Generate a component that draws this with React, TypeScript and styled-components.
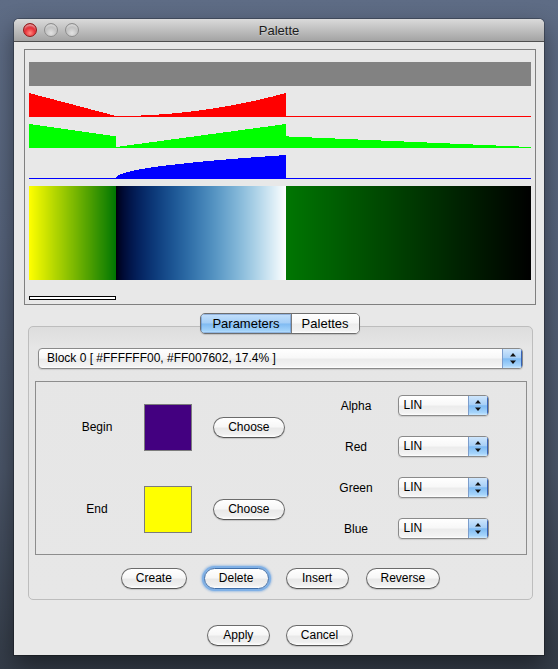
import React from "react";
import styled, { createGlobalStyle, css } from "styled-components";

const GlobalStyle = createGlobalStyle`
  html, body { margin: 0; padding: 0; }
  body {
    width: 558px;
    height: 669px;
    overflow: hidden;
    background: linear-gradient(to bottom, #5e6c85 0%, #56637b 35%, #4a5568 70%, #343c48 100%);
    font-family: "Liberation Sans", Arial, sans-serif;
  }
`;

/* ---------- data for the palette preview ---------- */
const CHART_W = 502;
const B0 = 87;
const B1 = 257;
type RGB = [number, number, number];

function colorAt(c: number): RGB {
  if (c < B0) {
    const t = c / B0;
    return [255 * (1 - t), 255 - 137 * t, 2 * t];
  }
  if (c < B1) {
    const t = (c - B0) / (B1 - B0);
    return [255 * t * t, 255 * t, 255 * Math.sqrt(t)];
  }
  const t = (c - B1) / (CHART_W - B1);
  return [0, 118 * (1 - t), 2 * (1 - t)];
}

const columns: RGB[] = Array.from({ length: CHART_W }, (_, x) => colorAt(x + 0.5));

function stepPath(ch: 0 | 1 | 2): string {
  let d = "M0 24";
  columns.forEach((rgb, x) => {
    const h = 1 + Math.round((rgb[ch] / 255) * 23);
    d += `V${24 - h}H${x + 1}`;
  });
  return d + "V24Z";
}

const rgbStr = (c: RGB) =>
  `rgb(${Math.round(c[0])},${Math.round(c[1])},${Math.round(c[2])})`;

/* ---------- window chrome ---------- */
const Desktop = styled.div`
  box-sizing: border-box;
  width: 558px;
  height: 669px;
  padding: 19px 0 0 14px;
`;

const Window = styled.div`
  width: 530px;
  height: 636px;
  display: flex;
  flex-direction: column;
  background: #e8e8e8;
  border-radius: 5px 5px 0 0;
  box-shadow: 0 0 0 1px rgba(0, 0, 0, 0.25), 0 10px 24px rgba(0, 0, 0, 0.45);
  overflow: hidden;
`;

const TitleBar = styled.div`
  height: 22px;
  border-bottom: 1px solid #4f4f4f;
  background: linear-gradient(to bottom, #dadada 0%, #c4c4c4 40%, #a3a3a3 100%);
  display: grid;
  grid-template-columns: 1fr auto 1fr;
  align-items: center;
`;

const Lights = styled.div`
  display: flex;
  gap: 7px;
  padding-left: 9px;
  padding-bottom: 1px;
`;

const Light = styled.div<{ $red?: boolean }>`
  width: 14px;
  height: 14px;
  border-radius: 50%;
  box-sizing: border-box;
  ${(p) =>
    p.$red
      ? css`
          border: 1px solid #8e1a1a;
          background: radial-gradient(circle at 50% 75%, #ff8a80 0%, #e8323a 45%, #b3151c 100%);
          box-shadow: inset 0 3px 2px -1px rgba(255, 255, 255, 0.55);
        `
      : css`
          border: 1px solid #8d8d8d;
          background: radial-gradient(circle at 50% 75%, #e2e2e2 0%, #c2c2c2 50%, #9e9e9e 100%);
          box-shadow: inset 0 3px 2px -1px rgba(255, 255, 255, 0.5);
        `}
`;

const Title = styled.div`
  font-size: 13px;
  color: #1c1c1c;
  text-shadow: 0 1px 0 rgba(255, 255, 255, 0.35);
`;

const Body = styled.div`
  display: flex;
  flex-direction: column;
  padding: 7px 0 0 10px;
`;

/* ---------- preview panel ---------- */
const Preview = styled.div`
  box-sizing: border-box;
  width: 512px;
  height: 256px;
  border: 1px solid #7f7f7f;
  padding: 12px 4px 4px 4px;
  display: flex;
  flex-direction: column;
  gap: 7px;
`;

const AlphaBar = styled.div`
  width: 502px;
  height: 24px;
  background: #828282;
`;

const ChartSvg = styled.svg`
  display: block;
`;

const SelectionMark = styled.div<{ $w: number }>`
  box-sizing: border-box;
  width: ${(p) => p.$w}px;
  height: 4px;
  margin-top: 9px;
  border: 1px solid #000;
  background: #fff;
`;

const ChannelChart: React.FC<{ ch: 0 | 1 | 2; color: string }> = ({ ch, color }) => (
  <ChartSvg width={CHART_W} height={24} viewBox={`0 0 ${CHART_W} 24`} shapeRendering="crispEdges">
    <path d={stepPath(ch)} fill={color} />
  </ChartSvg>
);

const GradientStrip: React.FC = () => (
  <ChartSvg width={CHART_W} height={94} viewBox={`0 0 ${CHART_W} 94`} shapeRendering="crispEdges">
    <defs>
      <linearGradient id="palGrad" x1="0" y1="0" x2="1" y2="0">
        {columns.map((c, x) => (
          <stop key={x} offset={(x + 0.5) / CHART_W} stopColor={rgbStr(c)} />
        ))}
      </linearGradient>
    </defs>
    <rect x={0} y={0} width={CHART_W} height={94} fill="url(#palGrad)" />
  </ChartSvg>
);

/* ---------- tabs ---------- */
const TabsRow = styled.div`
  width: 512px;
  margin-top: 8px;
  margin-bottom: -8px;
  display: flex;
  justify-content: center;
  position: relative;
  z-index: 1;
`;

const Segmented = styled.div`
  display: flex;
  height: 21px;
  box-sizing: border-box;
  border: 1px solid #6e6e6e;
  border-radius: 5px;
  overflow: hidden;
  box-shadow: 0 1px 1px rgba(0, 0, 0, 0.15);
`;

const Segment = styled.div<{ $active?: boolean }>`
  padding: 0 ${(p) => (p.$active ? 11 : 10)}px;
  font-size: 13px;
  line-height: 19px;
  color: #000;
  & + & {
    border-left: 1px solid #7a7a7a;
  }
  ${(p) =>
    p.$active
      ? css`
          background: linear-gradient(to bottom, #c4e0fb 0%, #a3cdf6 48%, #7fbaf2 52%, #a2d2fa 88%, #c3e5ff 100%);
          box-shadow: inset 0 0 0 1px rgba(60, 100, 170, 0.35);
        `
      : css`
          background: linear-gradient(to bottom, #ffffff 0%, #f7f7f7 48%, #ececec 52%, #f2f2f2 88%, #ffffff 100%);
        `}
`;

const TabPanel = styled.div`
  box-sizing: border-box;
  width: 505px;
  height: 274px;
  margin-left: 4px;
  border: 1px solid #bdbdbd;
  border-radius: 5px;
  background: linear-gradient(to bottom, #dddddd 0px, #e3e3e3 14px, #e6e6e6 20px, #e7e7e7 100%);
  padding-top: 21px;
  display: flex;
  flex-direction: column;
  align-items: center;
`;

/* ---------- popup (combo) ---------- */
const Popup = styled.div<{ $w: number }>`
  box-sizing: border-box;
  width: ${(p) => p.$w}px;
  height: 21px;
  display: flex;
  border: 1px solid #8a8a8a;
  border-radius: 4px;
  overflow: hidden;
  background: linear-gradient(to bottom, #ffffff 0%, #f8f8f8 45%, #ececec 55%, #f3f3f3 90%, #ffffff 100%);
  box-shadow: 0 1px 1px rgba(0, 0, 0, 0.12);
`;

const PopupText = styled.div<{ $pad: number }>`
  flex: 1;
  padding-left: ${(p) => p.$pad}px;
  font-size: 12px;
  line-height: 19px;
  color: #000;
  white-space: nowrap;
`;

const PopupArrows = styled.div`
  width: 19px;
  display: flex;
  align-items: center;
  justify-content: center;
  border-left: 1px solid #7c9dcc;
  background: linear-gradient(to bottom, #cfe6fc 0%, #a8d0f7 45%, #7fbbf3 52%, #a7d5fb 88%, #cde9ff 100%);
  box-shadow: inset -1px 0 0 #3762b6;
`;

const ArrowsIcon: React.FC = () => (
  <svg width="6" height="11" viewBox="0 0 6 11">
    <polygon points="0,3.5 3,0 6,3.5" fill="#111" />
    <polygon points="0,7.5 3,11 6,7.5" fill="#111" />
  </svg>
);

const PopupBox: React.FC<{ w: number; pad: number; text: string }> = ({ w, pad, text }) => (
  <Popup $w={w}>
    <PopupText $pad={pad}>{text}</PopupText>
    <PopupArrows>
      <ArrowsIcon />
    </PopupArrows>
  </Popup>
);

/* ---------- inner parameter box ---------- */
const InnerBox = styled.div`
  box-sizing: border-box;
  width: 492px;
  height: 174px;
  margin-top: 12px;
  border: 1px solid #8d8d8d;
  display: flex;
  align-items: center;
  padding-left: 24px;
`;

const ColorGrid = styled.div`
  display: grid;
  grid-template-columns: 75px 57px 93px;
  grid-auto-rows: 47px;
  row-gap: 35px;
  align-items: center;
`;

const ChannelGrid = styled.div`
  margin-left: 45px;
  margin-bottom: 2px;
  display: grid;
  grid-template-columns: 53px 106px;
  grid-auto-rows: 21px;
  row-gap: 20px;
  align-items: center;
`;

const Label = styled.div`
  font-size: 12px;
  color: #000;
  text-align: center;
`;

const Swatch = styled.div<{ $color: string }>`
  justify-self: end;
  box-sizing: border-box;
  width: 48px;
  height: 47px;
  border: 1px solid #7c7c7c;
  background: ${(p) => p.$color};
`;

const EndCell = styled.div`
  justify-self: end;
  display: flex;
`;

/* ---------- buttons ---------- */
const Button = styled.div<{ $focus?: boolean }>`
  box-sizing: border-box;
  height: 21px;
  min-width: 63px;
  padding: 0 14px;
  border: 1px solid #6b6b6b;
  border-bottom-color: #555;
  border-radius: 11px;
  font-size: 12px;
  line-height: 19px;
  text-align: center;
  color: #000;
  background: linear-gradient(to bottom, #ffffff 0%, #f7f7f7 45%, #e9e9e9 55%, #efefef 85%, #ffffff 100%);
  box-shadow: 0 1px 1px rgba(0, 0, 0, 0.15);
  ${(p) =>
    p.$focus &&
    css`
      border-color: #3f6ea8;
      box-shadow: 0 0 0 2px #7fb0e6, 0 0 2px 3px rgba(90, 150, 220, 0.45);
    `}
`;

const ButtonRow = styled.div`
  margin-top: 13px;
  display: flex;
  gap: 17px;
`;

const Footer = styled.div`
  width: 512px;
  margin-top: 25px;
  display: flex;
  justify-content: center;
  gap: 16px;
`;

const channels = ["Alpha", "Red", "Green", "Blue"];

export default function App() {
  return (
    <>
      <GlobalStyle />
      <Desktop>
        <Window>
          <TitleBar>
            <Lights>
              <Light $red />
              <Light />
              <Light />
            </Lights>
            <Title>Palette</Title>
            <div />
          </TitleBar>
          <Body>
            <Preview>
              <AlphaBar />
              <ChannelChart ch={0} color="#ff0000" />
              <ChannelChart ch={1} color="#00ff00" />
              <ChannelChart ch={2} color="#0000ff" />
              <GradientStrip />
              <SelectionMark $w={87} />
            </Preview>

            <TabsRow>
              <Segmented>
                <Segment $active>Parameters</Segment>
                <Segment>Palettes</Segment>
              </Segmented>
            </TabsRow>

            <TabPanel>
              <PopupBox w={485} pad={8} text="Block 0 [ #FFFFFF00, #FF007602, 17.4% ]" />
              <InnerBox>
                <ColorGrid>
                  <Label>Begin</Label>
                  <Swatch $color="#430080" />
                  <EndCell>
                    <Button>Choose</Button>
                  </EndCell>
                  <Label>End</Label>
                  <Swatch $color="#ffff00" />
                  <EndCell>
                    <Button>Choose</Button>
                  </EndCell>
                </ColorGrid>
                <ChannelGrid>
                  {channels.map((c) => (
                    <React.Fragment key={c}>
                      <Label>{c}</Label>
                      <EndCell>
                        <PopupBox w={91} pad={5} text="LIN" />
                      </EndCell>
                    </React.Fragment>
                  ))}
                </ChannelGrid>
              </InnerBox>
              <ButtonRow>
                <Button>Create</Button>
                <Button $focus>Delete</Button>
                <Button>Insert</Button>
                <Button>Reverse</Button>
              </ButtonRow>
            </TabPanel>

            <Footer>
              <Button>Apply</Button>
              <Button>Cancel</Button>
            </Footer>
          </Body>
        </Window>
      </Desktop>
    </>
  );
}
